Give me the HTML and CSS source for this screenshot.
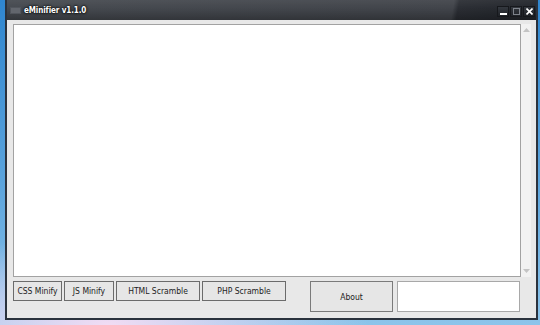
FILE: index.html
```html
<!DOCTYPE html>
<html lang="en">
<head>
    <meta charset="UTF-8">
    <title>eMinifier v1.1.0</title>
    <link rel="stylesheet" href="styles.css">
</head>
<body>
    <div class="window">
        <div class="titlebar">
            <span class="app-icon"></span>
            <span class="title">eMinifier v1.1.0</span>
            <div class="controls">
                <span class="ctl">
                    <svg width="7" height="7" viewBox="0 0 7 7"><rect x="0" y="5" width="7" height="2" fill="#fff"/></svg>
                </span>
                <span class="ctl">
                    <svg width="7" height="7" viewBox="0 0 7 7"><rect x="0.5" y="0.5" width="6" height="6" fill="none" stroke="#7d828a"/></svg>
                </span>
                <span class="ctl">
                    <svg width="7" height="7" viewBox="0 0 7 7"><path d="M0.5 0.5 L6.5 6.5 M6.5 0.5 L0.5 6.5" stroke="#fff" stroke-width="1.6"/></svg>
                </span>
            </div>
        </div>
        <div class="client">
            <div class="editor">
                <div class="textbox"></div>
                <div class="scrollbar">
                    <svg width="7" height="4" viewBox="0 0 7 4"><path d="M0 4 L3.5 0 L7 4 Z" fill="#c4c4c4"/></svg>
                    <svg width="7" height="4" viewBox="0 0 7 4"><path d="M0 0 L7 0 L3.5 4 Z" fill="#c4c4c4"/></svg>
                </div>
            </div>
            <div class="actions">
                <button class="btn btn-sm">CSS Minify</button>
                <button class="btn btn-sm">JS Minify</button>
                <button class="btn btn-wide">HTML Scramble</button>
                <button class="btn btn-wide">PHP Scramble</button>
                <button class="btn about">About</button>
                <input type="text" class="status">
            </div>
        </div>
    </div>
</body>
</html>
```

FILE: styles.css
```css
html, body {
    margin: 0;
    height: 325px;
    overflow: hidden;
}
body {
    font-family: "DejaVu Sans", Tahoma, sans-serif;
    background:
        radial-gradient(ellipse 260px 90px at 20% 100%, #f2dcf4 0%, rgba(242,220,244,0) 100%),
        linear-gradient(to bottom, #2f86cf 0%, #5aa3dc 55%, #8cc4ea 100%);
}
.window {
    margin-left: 5px;
    width: 529px;
    height: 318px;
    background: #2a323d;
    border: 2px solid #2a323d;
    border-top: none;
    display: flex;
    flex-direction: column;
}
.titlebar {
    height: 20px;
    flex: none;
    display: flex;
    align-items: center;
    padding-left: 3px;
    background:
        linear-gradient(to bottom, rgba(255,255,255,0.06) 0%, rgba(0,0,0,0) 45%, rgba(0,0,0,0.25) 100%),
        linear-gradient(100deg, #45494f 0%, #404349 84%, #2a2d33 85%, #22252b 100%);
}
.app-icon {
    width: 9px;
    height: 5px;
    background: #62666d;
    border: 1px solid #51555c;
    margin-right: 3px;
}
.title {
    color: #fff;
    font-family: "DejaVu Sans", sans-serif;
    font-stretch: condensed;
    font-weight: bold;
    font-size: 8px;
    letter-spacing: -0.1px;
    text-shadow: 0 0 3px #000, 0 0 2px #000;
}
.controls {
    margin-left: auto;
    display: flex;
    gap: 1px;
    align-self: flex-start;
    margin-top: 6px;
    margin-right: 1px;
}
.ctl {
    width: 12px;
    height: 11px;
    background: linear-gradient(to bottom, #34383f, #1f2227);
    border: 1px solid #16181c;
    display: flex;
    align-items: center;
    justify-content: center;
    box-sizing: border-box;
}
.client {
    flex: 1;
    background: #e8e8e8;
    padding: 4px 5px 6px 6px;
    display: flex;
    flex-direction: column;
    gap: 4px;
}
.editor {
    height: 253px;
    display: flex;
}
.textbox {
    flex: 1;
    background: #fff;
    border: 1px solid #a2a2a2;
}
.scrollbar {
    width: 10px;
    background: #f2f2f2;
    display: flex;
    flex-direction: column;
    justify-content: space-between;
    align-items: center;
    padding: 4px 0;
}
.actions {
    display: flex;
    align-items: flex-start;
    gap: 2px;
}
.btn {
    height: 20px;
    padding: 0;
    background: #e6e6e6;
    border: 1px solid #6b6b6b;
    font-family: "DejaVu Sans", Tahoma, sans-serif;
    font-stretch: condensed;
    font-size: 8.5px;
    color: #222;
}
.btn-sm { width: 50px; }
.btn-sm:first-child { width: 49px; }
.btn-wide { width: 84px; }
.about {
    width: 83px;
    height: 31px;
    margin-left: 22px;
    border-color: #7a7a7a;
}
.status {
    width: 123px;
    height: 31px;
    box-sizing: border-box;
    margin-left: 2px;
    background: #fff;
    border: 1px solid #a8a8a8;
}
```
